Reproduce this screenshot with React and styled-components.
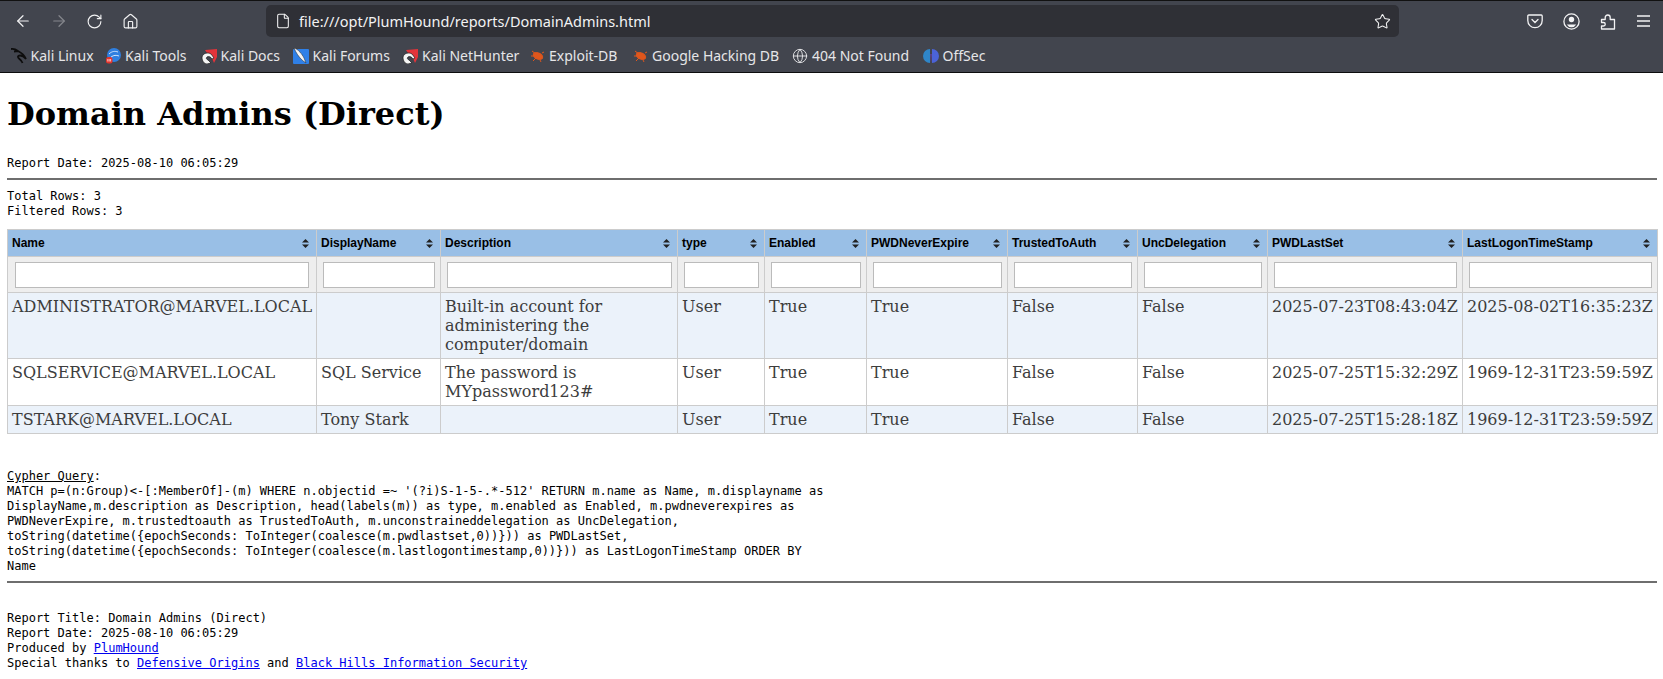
import React from "react";
import styled, { createGlobalStyle } from "styled-components";
import { ArrowLeft, ArrowRight, RotateCw, Home, File, Star, Globe } from "lucide-react";

const Global = createGlobalStyle`
  html, body { margin: 0; padding: 0; background: #fff; }
`;
const Chrome = styled.header`
  height: 73px; background: #42454e; border-top: 1px solid #111; border-bottom: 1px solid #0c0c0d;
  box-sizing: border-box; display: flex; flex-direction: column;
`;
const Nav = styled.div`
  height: 38px; display: flex; align-items: center; padding: 2px 0 0 14px; box-sizing: border-box;
`;
const NavBtn = styled.span`
  width: 36px; display: flex; justify-content: flex-start; color: ${p => p.$dim ? "#85878d" : "#f2f2f3"};
`;
const UrlBar = styled.div`
  margin-left: 108px; width: 1133px; height: 32px; background: #2f3036; border-radius: 5px;
  display: flex; align-items: center; padding: 0 8px 0 9px; box-sizing: border-box; color: #f2f2f3;
  font: 14.5px "Noto Sans", sans-serif; gap: 8px;
`;
const UrlText = styled.span` flex: 1; `;
const Tools = styled.div` margin-left: 128px; display: flex; gap: 20px; color: #f2f2f3; align-items: center; `;
const Marks = styled.nav`
  flex: 1; display: flex; align-items: center; padding: 0 0 0 10.500px;
  font: 14px "Noto Sans", sans-serif; color: #e6e6e8;
`;
const Mark = styled.span`
  display: flex; align-items: center; gap: 4px; white-space: nowrap; flex: 0 0 ${p => p.$w ? `${p.$w}px` : "auto"};
`;
const Page = styled.main` padding: 0 6px 0 7px; color: #000; `;
const Title = styled.h1`
  font: bold 32px/38px "DejaVu Serif", serif; margin: 22px 0 23px;
`;
const Mono = styled.div`
  font: 12px/15px "DejaVu Sans Mono", monospace; white-space: pre-wrap;
`;
const Rule = styled.hr`
  margin: 7px 0 ${p => p.$after || 9}px; border: 0; border-top: 1px solid #6e6e6e; border-bottom: 1px solid #6e6e6e; height: 0;
`;
const Table = styled.table`
  border-collapse: collapse; table-layout: fixed; width: 1650px; margin: 10px 0 35px;
  font: 16px/19px "DejaVu Serif", serif; color: #3d3d3d;
  td, th { border: 1px solid #ccc; box-sizing: border-box; }
`;
const Head = styled.th`
  background: #99bfe6; color: #000; text-align: left; height: 27px; padding: 0 4px;
  font: bold 12px "Liberation Sans", sans-serif; position: relative;
`;
const Arrows = styled.svg` position: absolute; right: 7px; top: 9px; `;
const FilterCell = styled.td`
  background: #eee; height: 36px; padding: 0;
`;
const FilterInput = styled.input`
  box-sizing: border-box; display: block; width: calc(100% - ${p => p.$inset}px); height: 26px; margin: 0 auto;
  border: 1px solid #bbb; background: #fff; padding: 0;
`;
const Cell = styled.td`
  padding: 4px; vertical-align: top; background: ${p => p.$odd ? "#ebf2fa" : "#fff"}; white-space: ${p => p.$wrap ? "normal" : "nowrap"};
`;
const A = styled.a` color: #00e; text-decoration: underline; `;
const Bottom = styled.div` margin-top: 28px; `;

const cols = [
  ["Name", 309], ["DisplayName", 124], ["Description", 237], ["type", 87], ["Enabled", 102],
  ["PWDNeverExpire", 141], ["TrustedToAuth", 130], ["UncDelegation", 130], ["PWDLastSet", 195], ["LastLogonTimeStamp", 195],
];
const rows = [
  ["ADMINISTRATOR@MARVEL.LOCAL", "", "Built-in account for administering the computer/domain", "User", "True", "True", "False", "False", "2025-07-23T08:43:04Z", "2025-08-02T16:35:23Z"],
  ["SQLSERVICE@MARVEL.LOCAL", "SQL Service", "The password is MYpassword123#", "User", "True", "True", "False", "False", "2025-07-25T15:32:29Z", "1969-12-31T23:59:59Z"],
  ["TSTARK@MARVEL.LOCAL", "Tony Stark", "", "User", "True", "True", "False", "False", "2025-07-25T15:28:18Z", "1969-12-31T23:59:59Z"],
];

const Kali = () => <svg width="16" height="17" viewBox="0 0 16 17" fill="none" stroke="#0d0d0d" strokeWidth="1.800"><path d="M0 2c3-.5 5 .5 7 2 3 1.500 6 3.500 8 8-2-2.500-4-3.500-6-3.500M7 4 3 4.500M9 8.500c-2.500 0-2.500 1.500-1 3 1.500 1.300 3 2.500 3.500 4.500"/></svg>;
const Tile = () => <svg width="16" height="16" viewBox="0 0 16 16"><path d="M4 2l12-1v8l-3 6-3-7-4-3z" fill="#e2343a"/><path d="M1 9c1-4 6-5 9-3l3 4-2 1c-1-2-3-3-5-2-1 1-1 2 1 3l3 3-4 1C3 16 1 13 1 9z" fill="#f5f5f5" stroke="#1a1a1a" strokeWidth=".7"/></svg>;
const ToolsIcon = () => <svg width="16" height="17" viewBox="0 0 16 17"><circle cx="9" cy="8" r="7" fill="#2f7fe0"/><path d="M4 7c3-3 6-3 9-2M6 10c3-2 5-2 8-1" stroke="#cfe3fb" fill="none"/><rect x="1" y="10" width="6.500" height="6.500" rx="2.500" fill="#e5352d"/><path d="M2.800 14.500v-2.500M4.200 14.500v-2.500M5.600 14.500v-2.500" stroke="#fff" strokeWidth=".7"/></svg>;
const Forums = () => <svg width="16" height="16" viewBox="0 0 16 16"><rect y="1" width="16" height="15" rx="1" fill="#2f80e8"/><path d="M1 0c4 1 8 6 10 10l2 5-4-3C6 9 3 5 1 0z" fill="#f4f4f4" stroke="#222" strokeWidth=".5"/></svg>;
const Bug = () => <svg width="15" height="15" viewBox="0 0 15 15" stroke="#e0561c" strokeWidth="1" fill="#e0561c"><ellipse cx="8" cy="8" rx="5" ry="3" transform="rotate(25 8 8)"/><path d="M2 3l4 3M1 8h4M3 13l3-3M12 5l2-1M10 12l1 2"/></svg>;
const OffSec = () => <svg width="16" height="16" viewBox="0 0 16 16"><path d="M7 1a7 7 0 0 0 0 14z" fill="#2f86c9"/><path d="M9 1a7 7 0 0 1 0 14z" fill="#4b63d8"/><path d="M7.500 6h1l-.5 9z" fill="#7a3fd0"/></svg>;
const Pocket = () => <svg width="16" height="16" viewBox="0 0 16 16" fill="none" stroke="#f2f2f3" strokeWidth="1.300"><path d="M1.800 2h12.400a1 1 0 0 1 1 1v4.500a7.200 7.200 0 0 1-14.400 0V3a1 1 0 0 1 1-1z"/><path d="M5 6.500l3 3 3-3" strokeLinecap="round"/></svg>;
const Account = () => <svg width="17" height="17" viewBox="0 0 17 17"><circle cx="8.500" cy="8.500" r="7.600" fill="none" stroke="#f2f2f3" strokeWidth="1.300"/><circle cx="8.500" cy="6.500" r="2.700" fill="#f2f2f3"/><path d="M3.800 11.500h9.400a5.400 5.400 0 0 1-9.400 0z" fill="#f2f2f3"/></svg>;
const Ext = () => <svg width="16" height="17" viewBox="0 0 16 17" fill="none" stroke="#f2f2f3" strokeWidth="1.300" strokeLinejoin="round"><path d="M1.500 6.500h3.700V4.500a2.500 2.500 0 0 1 5 0v2h4.300v9.500h-13v-3h2a1.700 1.700 0 0 0 0-3.500h-2z"/></svg>;
const Burger = () => <svg width="16" height="14" viewBox="0 0 16 14" stroke="#f2f2f3" strokeWidth="1.300"><path d="M1 2h13M1 7h13M1 12h13"/></svg>;
const Sort = () => <Arrows width="7" height="9" viewBox="0 0 7 9"><path d="M3.500 0 7 3.500H0zM3.500 9 0 5.500h7z" fill="#222"/></Arrows>;

export default function App() {
  return (
    <>
      <Global />
      <Chrome>
        <Nav>
          <NavBtn><ArrowLeft size={18} strokeWidth={1.6} /></NavBtn>
          <NavBtn $dim><ArrowRight size={18} strokeWidth={1.6} /></NavBtn>
          <NavBtn><RotateCw size={17} strokeWidth={1.6} /></NavBtn>
          <NavBtn><Home size={17} strokeWidth={1.6} /></NavBtn>
          <UrlBar>
            <File size={16} strokeWidth={1.6} />
            <UrlText>file:///opt/PlumHound/reports/DomainAdmins.html</UrlText>
            <Star size={17} strokeWidth={1.5} />
          </UrlBar>
          <Tools>
            <Pocket />
            <Account />
            <Ext />
            <Burger />
          </Tools>
        </Nav>
        <Marks>
          <Mark $w={94.5}><Kali />Kali Linux</Mark>
          <Mark $w={95.5}><ToolsIcon />Kali Tools</Mark>
          <Mark $w={92}><Tile />Kali Docs</Mark>
          <Mark $w={109.5}><Forums />Kali Forums</Mark>
          <Mark $w={128}><Tile />Kali NetHunter</Mark>
          <Mark $w={103}><Bug />Exploit-DB</Mark>
          <Mark $w={159}><Bug />Google Hacking DB</Mark>
          <Mark $w={130.5}><Globe size={16} strokeWidth={1.4} />404 Not Found</Mark>
          <Mark><OffSec />OffSec</Mark>
        </Marks>
      </Chrome>
      <Page>
        <Title>Domain Admins (Direct)</Title>
        <Mono>Report Date: 2025-08-10 06:05:29</Mono>
        <Rule />
        <Mono>Total Rows: 3{"\n"}Filtered Rows: 3</Mono>
        <Table>
          <colgroup>{cols.map(([n, w]) => <col key={n} width={w} />)}</colgroup>
          <thead>
            <tr>{cols.map(([n]) => <Head key={n}>{n}<Sort /></Head>)}</tr>
            <tr>{cols.map(([n], i) => <FilterCell key={n}><FilterInput $inset={i === 0 ? 14 : 11} /></FilterCell>)}</tr>
          </thead>
          <tbody>
            {rows.map((r, i) => (
              <tr key={i}>{r.map((c, j) => <Cell key={j} $odd={i % 2 === 0} $wrap={j === 2}>{c}</Cell>)}</tr>
            ))}
          </tbody>
        </Table>
        <Mono><u>Cypher Query</u>:{"\n"}MATCH p=(n:Group)&lt;-[:MemberOf]-(m) WHERE n.objectid =~ '(?i)S-1-5-.*-512' RETURN m.name as Name, m.displayname as{"\n"}DisplayName,m.description as Description, head(labels(m)) as type, m.enabled as Enabled, m.pwdneverexpires as{"\n"}PWDNeverExpire, m.trustedtoauth as TrustedToAuth, m.unconstraineddelegation as UncDelegation,{"\n"}toString(datetime({"{"}epochSeconds: ToInteger(coalesce(m.pwdlastset,0)){"}"})) as PWDLastSet,{"\n"}toString(datetime({"{"}epochSeconds: ToInteger(coalesce(m.lastlogontimestamp,0)){"}"})) as LastLogonTimeStamp ORDER BY{"\n"}Name</Mono>
        <Rule />
        <Bottom>
          <Mono>Report Title: Domain Admins (Direct){"\n"}Report Date: 2025-08-10 06:05:29{"\n"}Produced by <A href="#">PlumHound</A>{"\n"}Special thanks to <A href="#">Defensive Origins</A> and <A href="#">Black Hills Information Security</A></Mono>
        </Bottom>
      </Page>
    </>
  );
}
